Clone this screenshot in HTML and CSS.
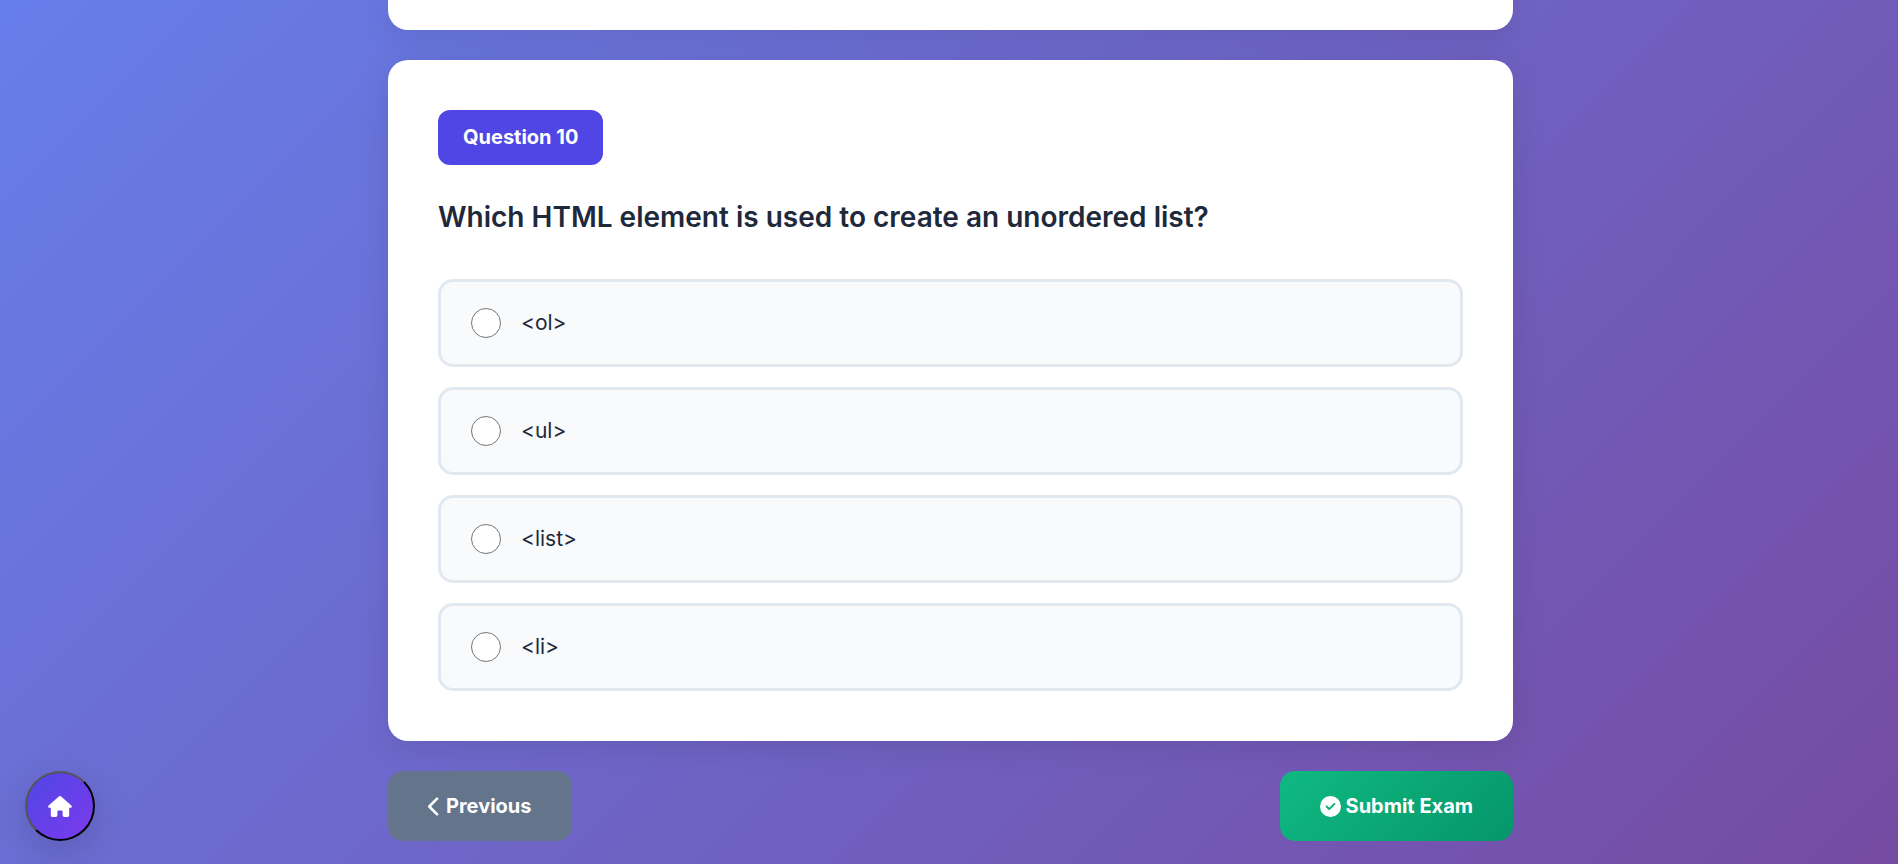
FILE: index.html
```
<!DOCTYPE html>
<html lang="en">
<head>
<meta charset="utf-8">
<title>Exam</title>
<meta name="viewport" content="width=device-width, initial-scale=1">
<link rel="stylesheet" href="styles.css">
</head>
<body>
<main class="exam">
  <section class="card card-previous"></section>
  <form class="exam-form">
    <fieldset class="card question">
      <div class="badge">Question 10</div>
      <h2 class="question-text" id="q10">Which HTML element is used to create an unordered list?</h2>
      <div class="options" role="radiogroup" aria-labelledby="q10">
        <label class="option"><input class="radio" type="radio" name="q10" value="ol"><span>&lt;ol&gt;</span></label>
        <label class="option"><input class="radio" type="radio" name="q10" value="ul"><span>&lt;ul&gt;</span></label>
        <label class="option"><input class="radio" type="radio" name="q10" value="list"><span>&lt;list&gt;</span></label>
        <label class="option"><input class="radio" type="radio" name="q10" value="li"><span>&lt;li&gt;</span></label>
      </div>
    </fieldset>
    <div class="actions">
      <button class="btn btn-previous" type="button">
        <svg class="icon icon-chevron" viewBox="0 0 320 512" aria-hidden="true"><path d="M9.4 233.4c-12.5 12.5-12.5 32.8 0 45.3l192 192c12.5 12.5 32.8 12.5 45.3 0s12.5-32.8 0-45.3L77.3 256 246.6 86.6c12.5-12.5 12.5-32.8 0-45.3s-32.8-12.5-45.3 0l-192 192z"/></svg>
        <span>Previous</span>
      </button>
      <button class="btn btn-submit" type="submit">
        <svg class="icon" viewBox="0 0 512 512" aria-hidden="true"><path d="M256 512A256 256 0 1 0 256 0a256 256 0 1 0 0 512zM369 209L241 337c-9.4 9.4-24.6 9.4-33.9 0l-64-64c-9.4-9.4-9.4-24.6 0-33.9s24.6-9.4 33.9 0l47 47L335 175c9.4-9.4 24.6-9.4 33.9 0s9.4 24.6 0 33.9z"/></svg>
        <span>Submit Exam</span>
      </button>
    </div>
  </form>
</main>
<button class="home" type="button" aria-label="Home">
  <svg class="icon icon-home" viewBox="0 0 576 512" aria-hidden="true"><path d="M575.8 255.5c0 18-15 32.1-32 32.1h-32l.7 160.2c0 2.7-.2 5.4-.5 8.1V472c0 22.1-17.9 40-40 40H456c-1.1 0-2.2 0-3.3-.1c-1.4 .1-2.8 .1-4.2 .1H416 392c-22.1 0-40-17.9-40-40V448 384c0-17.7-14.3-32-32-32H256c-17.7 0-32 14.3-32 32v64 24c0 22.1-17.9 40-40 40H160 128.1c-1.5 0-3-.1-4.5-.2c-1.2 .1-2.4 .2-3.6 .2H104c-22.1 0-40-17.9-40-40V360c0-.9 0-1.9 .1-2.8V287.6H32c-18 0-32-14-32-32.1c0-9 3-17 10-24L266.4 8c7-7 15-8 22-8s15 2 21 7L564.8 231.5c8 7 12 15 11 24z"/></svg>
</button>
</body>
</html>
```
FILE: styles.css
```
* {
  box-sizing: border-box;
}

body {
  margin: 0;
  min-height: 100vh;
  padding-left: 3px;
  font-family: Inter, "Liberation Sans", sans-serif;
  font-size: 20px;
  line-height: 32px;
  color: #1e293b;
  background: linear-gradient(135deg, #667eea 0%, #764ba2 100%) fixed;
}

.exam {
  max-width: 1125px;
  margin: 0 auto;
}

.card {
  min-width: 0;
  margin: 0 0 30px;
  padding: 50px;
  border: 0;
  border-radius: 20px;
  background: #fff;
  box-shadow: 0 5px 32px rgba(0, 0, 0, 0.1);
}

.card-previous {
  padding: 30px 0 0;
  border-radius: 0 0 20px 20px;
}

.badge {
  width: fit-content;
  padding: 12px 25px;
  border-radius: 12px;
  background: #4f46e5;
  color: #fff;
  font-weight: 700;
  line-height: 31px;
}

.question-text {
  margin: 30px 0 40px;
  font-size: 28px;
  font-weight: 600;
  line-height: 44px;
}

.options {
  display: flex;
  flex-direction: column;
  gap: 20px;
}

.option {
  display: flex;
  align-items: center;
  gap: 20px;
  padding: 25px 30px;
  border: 3px solid #e2e8f0;
  border-radius: 15px;
  background: #f8fafc;
  font-size: 21px;
  cursor: pointer;
}

.radio {
  appearance: none;
  width: 30px;
  height: 30px;
  margin: 0;
  border: 1px solid #767676;
  border-radius: 50%;
  background: #fff;
}

.radio:checked {
  border: 8px solid #4f46e5;
}

.actions {
  display: flex;
  justify-content: space-between;
  align-items: center;
  padding-bottom: 20px;
}

.btn {
  display: flex;
  align-items: center;
  gap: 5px;
  height: 70px;
  padding: 0 40px;
  border: 0;
  border-radius: 15px;
  color: #fff;
  font: inherit;
  font-weight: 700;
  cursor: pointer;
}

.btn-previous {
  background: #64748b;
}

.btn-submit {
  background: linear-gradient(135deg, #10b981, #059669);
}

.icon {
  width: 21px;
  height: 21px;
  fill: currentColor;
}

.icon-chevron {
  width: 13px;
}

.icon-home {
  width: 24px;
}

.home {
  position: fixed;
  left: 25px;
  bottom: 23px;
  display: flex;
  align-items: center;
  justify-content: center;
  width: 70px;
  height: 70px;
  padding: 0;
  border: 2px outset #000;
  border-radius: 50%;
  background: linear-gradient(135deg, #4f46e5, #7c3aed);
  color: #fff;
  box-shadow: 0 10px 38px rgba(0, 0, 0, 0.15);
  cursor: pointer;
}
```
